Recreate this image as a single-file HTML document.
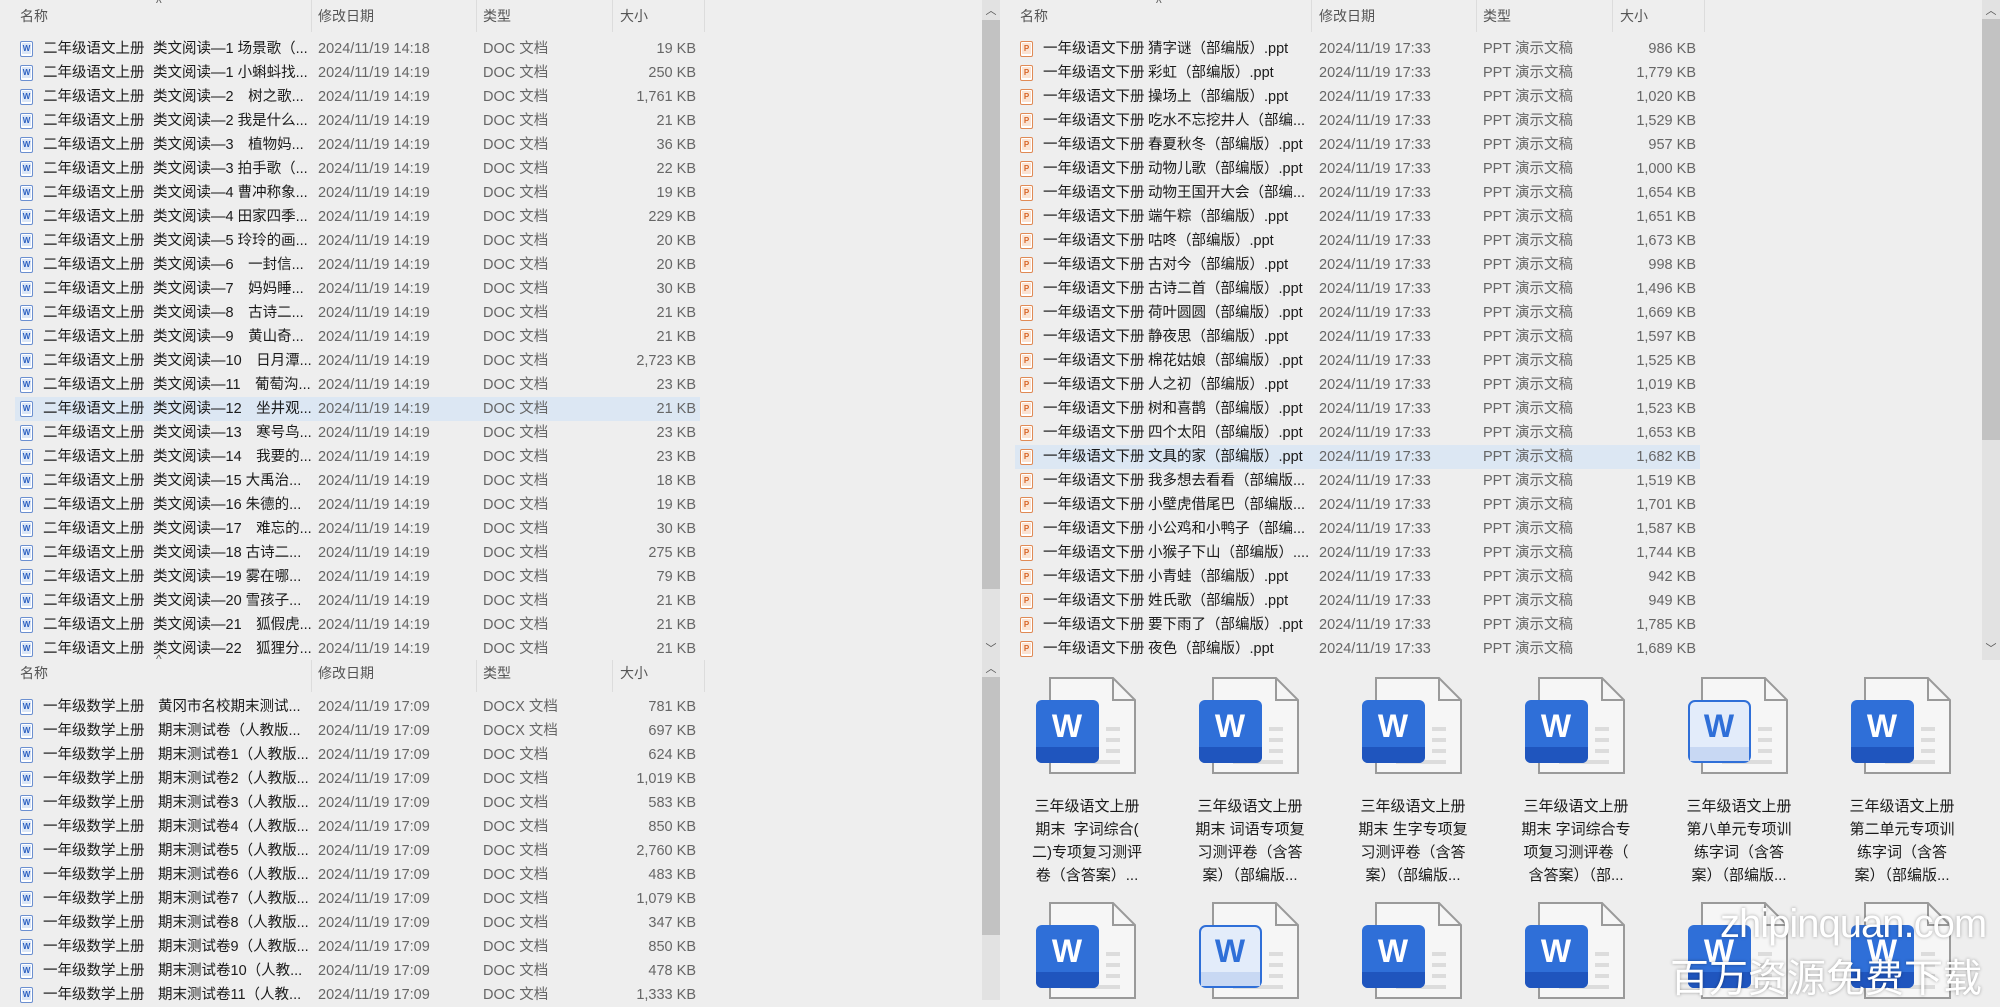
<!DOCTYPE html>
<html><head><meta charset="utf-8">
<style>
*{margin:0;padding:0;box-sizing:border-box}
body{width:2000px;height:1000px;overflow:hidden;background:#eeeeee;font-family:"Liberation Sans","Noto Sans CJK SC",sans-serif;font-size:14.5px;color:#1a1a1a;position:relative}
.a{position:absolute;white-space:nowrap}
.h{color:#555;font-size:14px}
.sep{position:absolute;top:0;width:1px;height:32px;background:#dcdcdc}
.r{position:absolute;height:24px;line-height:24px;white-space:nowrap}
.r span{position:absolute;top:0}
.g{color:#666}
.ic{position:absolute;top:4px;width:13px;height:16px;border:1px solid #6b8fd0;border-radius:2px;background:#fff;font-size:8px;line-height:13px;text-align:center;color:#2b5fc0;font-weight:bold}
.ic i{font-style:normal;display:block;margin:1px 1px;background:#dbe6f7;height:11px;line-height:11px}
.ip{border-color:#e08a55;color:#d8672a}
.ip i{background:#fbe3d3}
.sel{background:#dce7f3}
.sb{position:absolute;background:#e2e2e2}
.th{position:absolute;background:#c2c2c2}
.ar{position:absolute;font-size:11px;color:#555;width:18px;text-align:center}
.doc{position:absolute;width:100px;height:100px}
.lab{position:absolute;width:150px;text-align:center;font-size:15px;line-height:23px;color:#1a1a1a}
.wm{position:absolute;color:#fff;text-shadow:0 0 3px rgba(0,0,0,.35);white-space:nowrap}
</style></head><body>

<!-- LEFT TOP HEADER -->
<div class="a h" style="left:20px;top:6px">名称</div>
<div class="a h" style="left:156px;top:-4px;font-size:12px">^</div>
<div class="a h" style="left:318px;top:6px">修改日期</div>
<div class="a h" style="left:483px;top:6px">类型</div>
<div class="a h" style="left:620px;top:6px">大小</div>
<div class="sep" style="left:311px"></div><div class="sep" style="left:476px"></div><div class="sep" style="left:612px"></div><div class="sep" style="left:704px"></div>

<div style="position:absolute;left:0;top:0">
<div class="r" style="top:37px;width:700px"><b class="ic" style="left:20px"><i>W</i></b><span style="left:43px">二年级语文上册</span><span style="left:153px">类文阅读—1 场景歌（...</span><span class="g" style="left:318px">2024/11/19 14:18</span><span class="g" style="left:483px">DOC 文档</span><span class="g" style="right:4px">19 KB</span></div>
<div class="r" style="top:61px;width:700px"><b class="ic" style="left:20px"><i>W</i></b><span style="left:43px">二年级语文上册</span><span style="left:153px">类文阅读—1 小蝌蚪找...</span><span class="g" style="left:318px">2024/11/19 14:19</span><span class="g" style="left:483px">DOC 文档</span><span class="g" style="right:4px">250 KB</span></div>
<div class="r" style="top:85px;width:700px"><b class="ic" style="left:20px"><i>W</i></b><span style="left:43px">二年级语文上册</span><span style="left:153px">类文阅读—2　树之歌...</span><span class="g" style="left:318px">2024/11/19 14:19</span><span class="g" style="left:483px">DOC 文档</span><span class="g" style="right:4px">1,761 KB</span></div>
<div class="r" style="top:109px;width:700px"><b class="ic" style="left:20px"><i>W</i></b><span style="left:43px">二年级语文上册</span><span style="left:153px">类文阅读—2 我是什么...</span><span class="g" style="left:318px">2024/11/19 14:19</span><span class="g" style="left:483px">DOC 文档</span><span class="g" style="right:4px">21 KB</span></div>
<div class="r" style="top:133px;width:700px"><b class="ic" style="left:20px"><i>W</i></b><span style="left:43px">二年级语文上册</span><span style="left:153px">类文阅读—3　植物妈...</span><span class="g" style="left:318px">2024/11/19 14:19</span><span class="g" style="left:483px">DOC 文档</span><span class="g" style="right:4px">36 KB</span></div>
<div class="r" style="top:157px;width:700px"><b class="ic" style="left:20px"><i>W</i></b><span style="left:43px">二年级语文上册</span><span style="left:153px">类文阅读—3 拍手歌（...</span><span class="g" style="left:318px">2024/11/19 14:19</span><span class="g" style="left:483px">DOC 文档</span><span class="g" style="right:4px">22 KB</span></div>
<div class="r" style="top:181px;width:700px"><b class="ic" style="left:20px"><i>W</i></b><span style="left:43px">二年级语文上册</span><span style="left:153px">类文阅读—4 曹冲称象...</span><span class="g" style="left:318px">2024/11/19 14:19</span><span class="g" style="left:483px">DOC 文档</span><span class="g" style="right:4px">19 KB</span></div>
<div class="r" style="top:205px;width:700px"><b class="ic" style="left:20px"><i>W</i></b><span style="left:43px">二年级语文上册</span><span style="left:153px">类文阅读—4 田家四季...</span><span class="g" style="left:318px">2024/11/19 14:19</span><span class="g" style="left:483px">DOC 文档</span><span class="g" style="right:4px">229 KB</span></div>
<div class="r" style="top:229px;width:700px"><b class="ic" style="left:20px"><i>W</i></b><span style="left:43px">二年级语文上册</span><span style="left:153px">类文阅读—5 玲玲的画...</span><span class="g" style="left:318px">2024/11/19 14:19</span><span class="g" style="left:483px">DOC 文档</span><span class="g" style="right:4px">20 KB</span></div>
<div class="r" style="top:253px;width:700px"><b class="ic" style="left:20px"><i>W</i></b><span style="left:43px">二年级语文上册</span><span style="left:153px">类文阅读—6　一封信...</span><span class="g" style="left:318px">2024/11/19 14:19</span><span class="g" style="left:483px">DOC 文档</span><span class="g" style="right:4px">20 KB</span></div>
<div class="r" style="top:277px;width:700px"><b class="ic" style="left:20px"><i>W</i></b><span style="left:43px">二年级语文上册</span><span style="left:153px">类文阅读—7　妈妈睡...</span><span class="g" style="left:318px">2024/11/19 14:19</span><span class="g" style="left:483px">DOC 文档</span><span class="g" style="right:4px">30 KB</span></div>
<div class="r" style="top:301px;width:700px"><b class="ic" style="left:20px"><i>W</i></b><span style="left:43px">二年级语文上册</span><span style="left:153px">类文阅读—8　古诗二...</span><span class="g" style="left:318px">2024/11/19 14:19</span><span class="g" style="left:483px">DOC 文档</span><span class="g" style="right:4px">21 KB</span></div>
<div class="r" style="top:325px;width:700px"><b class="ic" style="left:20px"><i>W</i></b><span style="left:43px">二年级语文上册</span><span style="left:153px">类文阅读—9　黄山奇...</span><span class="g" style="left:318px">2024/11/19 14:19</span><span class="g" style="left:483px">DOC 文档</span><span class="g" style="right:4px">21 KB</span></div>
<div class="r" style="top:349px;width:700px"><b class="ic" style="left:20px"><i>W</i></b><span style="left:43px">二年级语文上册</span><span style="left:153px">类文阅读—10　日月潭...</span><span class="g" style="left:318px">2024/11/19 14:19</span><span class="g" style="left:483px">DOC 文档</span><span class="g" style="right:4px">2,723 KB</span></div>
<div class="r" style="top:373px;width:700px"><b class="ic" style="left:20px"><i>W</i></b><span style="left:43px">二年级语文上册</span><span style="left:153px">类文阅读—11　葡萄沟...</span><span class="g" style="left:318px">2024/11/19 14:19</span><span class="g" style="left:483px">DOC 文档</span><span class="g" style="right:4px">23 KB</span></div>
<div class="r sel" style="top:397px;left:15px;width:685px"><b class="ic" style="left:5px"><i>W</i></b><span style="left:28px">二年级语文上册</span><span style="left:138px">类文阅读—12　坐井观...</span><span class="g" style="left:303px">2024/11/19 14:19</span><span class="g" style="left:468px">DOC 文档</span><span class="g" style="right:4px">21 KB</span></div>
<div class="r" style="top:421px;width:700px"><b class="ic" style="left:20px"><i>W</i></b><span style="left:43px">二年级语文上册</span><span style="left:153px">类文阅读—13　寒号鸟...</span><span class="g" style="left:318px">2024/11/19 14:19</span><span class="g" style="left:483px">DOC 文档</span><span class="g" style="right:4px">23 KB</span></div>
<div class="r" style="top:445px;width:700px"><b class="ic" style="left:20px"><i>W</i></b><span style="left:43px">二年级语文上册</span><span style="left:153px">类文阅读—14　我要的...</span><span class="g" style="left:318px">2024/11/19 14:19</span><span class="g" style="left:483px">DOC 文档</span><span class="g" style="right:4px">23 KB</span></div>
<div class="r" style="top:469px;width:700px"><b class="ic" style="left:20px"><i>W</i></b><span style="left:43px">二年级语文上册</span><span style="left:153px">类文阅读—15 大禹治...</span><span class="g" style="left:318px">2024/11/19 14:19</span><span class="g" style="left:483px">DOC 文档</span><span class="g" style="right:4px">18 KB</span></div>
<div class="r" style="top:493px;width:700px"><b class="ic" style="left:20px"><i>W</i></b><span style="left:43px">二年级语文上册</span><span style="left:153px">类文阅读—16 朱德的...</span><span class="g" style="left:318px">2024/11/19 14:19</span><span class="g" style="left:483px">DOC 文档</span><span class="g" style="right:4px">19 KB</span></div>
<div class="r" style="top:517px;width:700px"><b class="ic" style="left:20px"><i>W</i></b><span style="left:43px">二年级语文上册</span><span style="left:153px">类文阅读—17　难忘的...</span><span class="g" style="left:318px">2024/11/19 14:19</span><span class="g" style="left:483px">DOC 文档</span><span class="g" style="right:4px">30 KB</span></div>
<div class="r" style="top:541px;width:700px"><b class="ic" style="left:20px"><i>W</i></b><span style="left:43px">二年级语文上册</span><span style="left:153px">类文阅读—18 古诗二...</span><span class="g" style="left:318px">2024/11/19 14:19</span><span class="g" style="left:483px">DOC 文档</span><span class="g" style="right:4px">275 KB</span></div>
<div class="r" style="top:565px;width:700px"><b class="ic" style="left:20px"><i>W</i></b><span style="left:43px">二年级语文上册</span><span style="left:153px">类文阅读—19 雾在哪...</span><span class="g" style="left:318px">2024/11/19 14:19</span><span class="g" style="left:483px">DOC 文档</span><span class="g" style="right:4px">79 KB</span></div>
<div class="r" style="top:589px;width:700px"><b class="ic" style="left:20px"><i>W</i></b><span style="left:43px">二年级语文上册</span><span style="left:153px">类文阅读—20 雪孩子...</span><span class="g" style="left:318px">2024/11/19 14:19</span><span class="g" style="left:483px">DOC 文档</span><span class="g" style="right:4px">21 KB</span></div>
<div class="r" style="top:613px;width:700px"><b class="ic" style="left:20px"><i>W</i></b><span style="left:43px">二年级语文上册</span><span style="left:153px">类文阅读—21　狐假虎...</span><span class="g" style="left:318px">2024/11/19 14:19</span><span class="g" style="left:483px">DOC 文档</span><span class="g" style="right:4px">21 KB</span></div>
<div class="r" style="top:637px;width:700px"><b class="ic" style="left:20px"><i>W</i></b><span style="left:43px">二年级语文上册</span><span style="left:153px">类文阅读—22　狐狸分...</span><span class="g" style="left:318px">2024/11/19 14:19</span><span class="g" style="left:483px">DOC 文档</span><span class="g" style="right:4px">21 KB</span></div>
</div>

<!-- LEFT BOTTOM HEADER -->
<div class="a h" style="left:20px;top:663px">名称</div>
<div class="a h" style="left:156px;top:652px;font-size:12px">^</div>
<div class="a h" style="left:318px;top:663px">修改日期</div>
<div class="a h" style="left:483px;top:663px">类型</div>
<div class="a h" style="left:620px;top:663px">大小</div>
<div class="sep" style="left:311px;top:660px"></div><div class="sep" style="left:476px;top:660px"></div><div class="sep" style="left:612px;top:660px"></div><div class="sep" style="left:704px;top:660px"></div>

<div style="position:absolute;left:0;top:0">
<div class="r" style="top:695px;width:700px"><b class="ic" style="left:20px"><i>W</i></b><span style="left:43px">一年级数学上册</span><span style="left:158px">黄冈市名校期末测试...</span><span class="g" style="left:318px">2024/11/19 17:09</span><span class="g" style="left:483px">DOCX 文档</span><span class="g" style="right:4px">781 KB</span></div>
<div class="r" style="top:719px;width:700px"><b class="ic" style="left:20px"><i>W</i></b><span style="left:43px">一年级数学上册</span><span style="left:158px">期末测试卷（人教版...</span><span class="g" style="left:318px">2024/11/19 17:09</span><span class="g" style="left:483px">DOCX 文档</span><span class="g" style="right:4px">697 KB</span></div>
<div class="r" style="top:743px;width:700px"><b class="ic" style="left:20px"><i>W</i></b><span style="left:43px">一年级数学上册</span><span style="left:158px">期末测试卷1（人教版...</span><span class="g" style="left:318px">2024/11/19 17:09</span><span class="g" style="left:483px">DOC 文档</span><span class="g" style="right:4px">624 KB</span></div>
<div class="r" style="top:767px;width:700px"><b class="ic" style="left:20px"><i>W</i></b><span style="left:43px">一年级数学上册</span><span style="left:158px">期末测试卷2（人教版...</span><span class="g" style="left:318px">2024/11/19 17:09</span><span class="g" style="left:483px">DOC 文档</span><span class="g" style="right:4px">1,019 KB</span></div>
<div class="r" style="top:791px;width:700px"><b class="ic" style="left:20px"><i>W</i></b><span style="left:43px">一年级数学上册</span><span style="left:158px">期末测试卷3（人教版...</span><span class="g" style="left:318px">2024/11/19 17:09</span><span class="g" style="left:483px">DOC 文档</span><span class="g" style="right:4px">583 KB</span></div>
<div class="r" style="top:815px;width:700px"><b class="ic" style="left:20px"><i>W</i></b><span style="left:43px">一年级数学上册</span><span style="left:158px">期末测试卷4（人教版...</span><span class="g" style="left:318px">2024/11/19 17:09</span><span class="g" style="left:483px">DOC 文档</span><span class="g" style="right:4px">850 KB</span></div>
<div class="r" style="top:839px;width:700px"><b class="ic" style="left:20px"><i>W</i></b><span style="left:43px">一年级数学上册</span><span style="left:158px">期末测试卷5（人教版...</span><span class="g" style="left:318px">2024/11/19 17:09</span><span class="g" style="left:483px">DOC 文档</span><span class="g" style="right:4px">2,760 KB</span></div>
<div class="r" style="top:863px;width:700px"><b class="ic" style="left:20px"><i>W</i></b><span style="left:43px">一年级数学上册</span><span style="left:158px">期末测试卷6（人教版...</span><span class="g" style="left:318px">2024/11/19 17:09</span><span class="g" style="left:483px">DOC 文档</span><span class="g" style="right:4px">483 KB</span></div>
<div class="r" style="top:887px;width:700px"><b class="ic" style="left:20px"><i>W</i></b><span style="left:43px">一年级数学上册</span><span style="left:158px">期末测试卷7（人教版...</span><span class="g" style="left:318px">2024/11/19 17:09</span><span class="g" style="left:483px">DOC 文档</span><span class="g" style="right:4px">1,079 KB</span></div>
<div class="r" style="top:911px;width:700px"><b class="ic" style="left:20px"><i>W</i></b><span style="left:43px">一年级数学上册</span><span style="left:158px">期末测试卷8（人教版...</span><span class="g" style="left:318px">2024/11/19 17:09</span><span class="g" style="left:483px">DOC 文档</span><span class="g" style="right:4px">347 KB</span></div>
<div class="r" style="top:935px;width:700px"><b class="ic" style="left:20px"><i>W</i></b><span style="left:43px">一年级数学上册</span><span style="left:158px">期末测试卷9（人教版...</span><span class="g" style="left:318px">2024/11/19 17:09</span><span class="g" style="left:483px">DOC 文档</span><span class="g" style="right:4px">850 KB</span></div>
<div class="r" style="top:959px;width:700px"><b class="ic" style="left:20px"><i>W</i></b><span style="left:43px">一年级数学上册</span><span style="left:158px">期末测试卷10（人教...</span><span class="g" style="left:318px">2024/11/19 17:09</span><span class="g" style="left:483px">DOC 文档</span><span class="g" style="right:4px">478 KB</span></div>
<div class="r" style="top:983px;width:700px"><b class="ic" style="left:20px"><i>W</i></b><span style="left:43px">一年级数学上册</span><span style="left:158px">期末测试卷11（人教...</span><span class="g" style="left:318px">2024/11/19 17:09</span><span class="g" style="left:483px">DOC 文档</span><span class="g" style="right:4px">1,333 KB</span></div>
</div>

<!-- LEFT SCROLLBARS -->
<div class="sb" style="left:982px;top:0;width:18px;height:660px"></div>
<div class="th" style="left:982px;top:20px;width:18px;height:569px"></div>
<div class="ar" style="left:982px;top:2px">︿</div>
<div class="ar" style="left:982px;top:640px">﹀</div>
<div class="sb" style="left:982px;top:660px;width:18px;height:340px"></div>
<div class="th" style="left:982px;top:677px;width:18px;height:258px"></div>
<div class="ar" style="left:982px;top:660px">︿</div>

<!-- RIGHT TOP HEADER -->
<div class="a h" style="left:1020px;top:6px">名称</div>
<div class="a h" style="left:1156px;top:-4px;font-size:12px">^</div>
<div class="a h" style="left:1319px;top:6px">修改日期</div>
<div class="a h" style="left:1483px;top:6px">类型</div>
<div class="a h" style="left:1620px;top:6px">大小</div>
<div class="sep" style="left:1311px"></div><div class="sep" style="left:1476px"></div><div class="sep" style="left:1612px"></div><div class="sep" style="left:1704px"></div>

<div style="position:absolute;left:1000px;top:0">
<div class="r" style="top:37px;width:700px"><b class="ic ip" style="left:20px"><i>P</i></b><span style="left:43px">一年级语文下册</span><span style="left:148px">猜字谜（部编版）.ppt</span><span class="g" style="left:319px">2024/11/19 17:33</span><span class="g" style="left:483px">PPT 演示文稿</span><span class="g" style="right:4px">986 KB</span></div>
<div class="r" style="top:61px;width:700px"><b class="ic ip" style="left:20px"><i>P</i></b><span style="left:43px">一年级语文下册</span><span style="left:148px">彩虹（部编版）.ppt</span><span class="g" style="left:319px">2024/11/19 17:33</span><span class="g" style="left:483px">PPT 演示文稿</span><span class="g" style="right:4px">1,779 KB</span></div>
<div class="r" style="top:85px;width:700px"><b class="ic ip" style="left:20px"><i>P</i></b><span style="left:43px">一年级语文下册</span><span style="left:148px">操场上（部编版）.ppt</span><span class="g" style="left:319px">2024/11/19 17:33</span><span class="g" style="left:483px">PPT 演示文稿</span><span class="g" style="right:4px">1,020 KB</span></div>
<div class="r" style="top:109px;width:700px"><b class="ic ip" style="left:20px"><i>P</i></b><span style="left:43px">一年级语文下册</span><span style="left:148px">吃水不忘挖井人（部编...</span><span class="g" style="left:319px">2024/11/19 17:33</span><span class="g" style="left:483px">PPT 演示文稿</span><span class="g" style="right:4px">1,529 KB</span></div>
<div class="r" style="top:133px;width:700px"><b class="ic ip" style="left:20px"><i>P</i></b><span style="left:43px">一年级语文下册</span><span style="left:148px">春夏秋冬（部编版）.ppt</span><span class="g" style="left:319px">2024/11/19 17:33</span><span class="g" style="left:483px">PPT 演示文稿</span><span class="g" style="right:4px">957 KB</span></div>
<div class="r" style="top:157px;width:700px"><b class="ic ip" style="left:20px"><i>P</i></b><span style="left:43px">一年级语文下册</span><span style="left:148px">动物儿歌（部编版）.ppt</span><span class="g" style="left:319px">2024/11/19 17:33</span><span class="g" style="left:483px">PPT 演示文稿</span><span class="g" style="right:4px">1,000 KB</span></div>
<div class="r" style="top:181px;width:700px"><b class="ic ip" style="left:20px"><i>P</i></b><span style="left:43px">一年级语文下册</span><span style="left:148px">动物王国开大会（部编...</span><span class="g" style="left:319px">2024/11/19 17:33</span><span class="g" style="left:483px">PPT 演示文稿</span><span class="g" style="right:4px">1,654 KB</span></div>
<div class="r" style="top:205px;width:700px"><b class="ic ip" style="left:20px"><i>P</i></b><span style="left:43px">一年级语文下册</span><span style="left:148px">端午粽（部编版）.ppt</span><span class="g" style="left:319px">2024/11/19 17:33</span><span class="g" style="left:483px">PPT 演示文稿</span><span class="g" style="right:4px">1,651 KB</span></div>
<div class="r" style="top:229px;width:700px"><b class="ic ip" style="left:20px"><i>P</i></b><span style="left:43px">一年级语文下册</span><span style="left:148px">咕咚（部编版）.ppt</span><span class="g" style="left:319px">2024/11/19 17:33</span><span class="g" style="left:483px">PPT 演示文稿</span><span class="g" style="right:4px">1,673 KB</span></div>
<div class="r" style="top:253px;width:700px"><b class="ic ip" style="left:20px"><i>P</i></b><span style="left:43px">一年级语文下册</span><span style="left:148px">古对今（部编版）.ppt</span><span class="g" style="left:319px">2024/11/19 17:33</span><span class="g" style="left:483px">PPT 演示文稿</span><span class="g" style="right:4px">998 KB</span></div>
<div class="r" style="top:277px;width:700px"><b class="ic ip" style="left:20px"><i>P</i></b><span style="left:43px">一年级语文下册</span><span style="left:148px">古诗二首（部编版）.ppt</span><span class="g" style="left:319px">2024/11/19 17:33</span><span class="g" style="left:483px">PPT 演示文稿</span><span class="g" style="right:4px">1,496 KB</span></div>
<div class="r" style="top:301px;width:700px"><b class="ic ip" style="left:20px"><i>P</i></b><span style="left:43px">一年级语文下册</span><span style="left:148px">荷叶圆圆（部编版）.ppt</span><span class="g" style="left:319px">2024/11/19 17:33</span><span class="g" style="left:483px">PPT 演示文稿</span><span class="g" style="right:4px">1,669 KB</span></div>
<div class="r" style="top:325px;width:700px"><b class="ic ip" style="left:20px"><i>P</i></b><span style="left:43px">一年级语文下册</span><span style="left:148px">静夜思（部编版）.ppt</span><span class="g" style="left:319px">2024/11/19 17:33</span><span class="g" style="left:483px">PPT 演示文稿</span><span class="g" style="right:4px">1,597 KB</span></div>
<div class="r" style="top:349px;width:700px"><b class="ic ip" style="left:20px"><i>P</i></b><span style="left:43px">一年级语文下册</span><span style="left:148px">棉花姑娘（部编版）.ppt</span><span class="g" style="left:319px">2024/11/19 17:33</span><span class="g" style="left:483px">PPT 演示文稿</span><span class="g" style="right:4px">1,525 KB</span></div>
<div class="r" style="top:373px;width:700px"><b class="ic ip" style="left:20px"><i>P</i></b><span style="left:43px">一年级语文下册</span><span style="left:148px">人之初（部编版）.ppt</span><span class="g" style="left:319px">2024/11/19 17:33</span><span class="g" style="left:483px">PPT 演示文稿</span><span class="g" style="right:4px">1,019 KB</span></div>
<div class="r" style="top:397px;width:700px"><b class="ic ip" style="left:20px"><i>P</i></b><span style="left:43px">一年级语文下册</span><span style="left:148px">树和喜鹊（部编版）.ppt</span><span class="g" style="left:319px">2024/11/19 17:33</span><span class="g" style="left:483px">PPT 演示文稿</span><span class="g" style="right:4px">1,523 KB</span></div>
<div class="r" style="top:421px;width:700px"><b class="ic ip" style="left:20px"><i>P</i></b><span style="left:43px">一年级语文下册</span><span style="left:148px">四个太阳（部编版）.ppt</span><span class="g" style="left:319px">2024/11/19 17:33</span><span class="g" style="left:483px">PPT 演示文稿</span><span class="g" style="right:4px">1,653 KB</span></div>
<div class="r sel" style="top:445px;left:15px;width:685px"><b class="ic ip" style="left:5px"><i>P</i></b><span style="left:28px">一年级语文下册</span><span style="left:133px">文具的家（部编版）.ppt</span><span class="g" style="left:304px">2024/11/19 17:33</span><span class="g" style="left:468px">PPT 演示文稿</span><span class="g" style="right:4px">1,682 KB</span></div>
<div class="r" style="top:469px;width:700px"><b class="ic ip" style="left:20px"><i>P</i></b><span style="left:43px">一年级语文下册</span><span style="left:148px">我多想去看看（部编版...</span><span class="g" style="left:319px">2024/11/19 17:33</span><span class="g" style="left:483px">PPT 演示文稿</span><span class="g" style="right:4px">1,519 KB</span></div>
<div class="r" style="top:493px;width:700px"><b class="ic ip" style="left:20px"><i>P</i></b><span style="left:43px">一年级语文下册</span><span style="left:148px">小壁虎借尾巴（部编版...</span><span class="g" style="left:319px">2024/11/19 17:33</span><span class="g" style="left:483px">PPT 演示文稿</span><span class="g" style="right:4px">1,701 KB</span></div>
<div class="r" style="top:517px;width:700px"><b class="ic ip" style="left:20px"><i>P</i></b><span style="left:43px">一年级语文下册</span><span style="left:148px">小公鸡和小鸭子（部编...</span><span class="g" style="left:319px">2024/11/19 17:33</span><span class="g" style="left:483px">PPT 演示文稿</span><span class="g" style="right:4px">1,587 KB</span></div>
<div class="r" style="top:541px;width:700px"><b class="ic ip" style="left:20px"><i>P</i></b><span style="left:43px">一年级语文下册</span><span style="left:148px">小猴子下山（部编版）....</span><span class="g" style="left:319px">2024/11/19 17:33</span><span class="g" style="left:483px">PPT 演示文稿</span><span class="g" style="right:4px">1,744 KB</span></div>
<div class="r" style="top:565px;width:700px"><b class="ic ip" style="left:20px"><i>P</i></b><span style="left:43px">一年级语文下册</span><span style="left:148px">小青蛙（部编版）.ppt</span><span class="g" style="left:319px">2024/11/19 17:33</span><span class="g" style="left:483px">PPT 演示文稿</span><span class="g" style="right:4px">942 KB</span></div>
<div class="r" style="top:589px;width:700px"><b class="ic ip" style="left:20px"><i>P</i></b><span style="left:43px">一年级语文下册</span><span style="left:148px">姓氏歌（部编版）.ppt</span><span class="g" style="left:319px">2024/11/19 17:33</span><span class="g" style="left:483px">PPT 演示文稿</span><span class="g" style="right:4px">949 KB</span></div>
<div class="r" style="top:613px;width:700px"><b class="ic ip" style="left:20px"><i>P</i></b><span style="left:43px">一年级语文下册</span><span style="left:148px">要下雨了（部编版）.ppt</span><span class="g" style="left:319px">2024/11/19 17:33</span><span class="g" style="left:483px">PPT 演示文稿</span><span class="g" style="right:4px">1,785 KB</span></div>
<div class="r" style="top:637px;width:700px"><b class="ic ip" style="left:20px"><i>P</i></b><span style="left:43px">一年级语文下册</span><span style="left:148px">夜色（部编版）.ppt</span><span class="g" style="left:319px">2024/11/19 17:33</span><span class="g" style="left:483px">PPT 演示文稿</span><span class="g" style="right:4px">1,689 KB</span></div>
</div>

<!-- RIGHT SCROLLBAR -->
<div class="sb" style="left:1982px;top:0;width:18px;height:660px"></div>
<div class="th" style="left:1982px;top:19px;width:18px;height:421px"></div>
<div class="ar" style="left:1982px;top:2px">︿</div>
<div class="ar" style="left:1982px;top:640px">﹀</div>

<!-- ICON GRID -->
<svg width="0" height="0" style="position:absolute">
<defs>
<g id="pg">
<path d="M14 1 H77 L99 23 V96 H14 Z" fill="#f6f6f6" stroke="#9a9a9a" stroke-width="2"/>
<path d="M77 1 V23 H99" fill="none" stroke="#9a9a9a" stroke-width="2"/>
<rect x="70" y="50" width="14" height="4" fill="#dcdcdc"/>
<rect x="70" y="61" width="14" height="4" fill="#dcdcdc"/>
<rect x="70" y="72" width="14" height="4" fill="#dcdcdc"/>
<rect x="34" y="83" width="50" height="4" fill="#dcdcdc"/>
</g>
<g id="wb">
<rect x="0" y="23" width="63" height="63" rx="6" fill="#2f6fd8"/>
<path d="M0 70 H63 V80 a6 6 0 0 1 -6 6 H6 a6 6 0 0 1 -6 -6 Z" fill="#1f55be"/>
<text x="31" y="60" text-anchor="middle" font-family="Liberation Sans,sans-serif" font-weight="bold" font-size="32" fill="#fff">W</text>
</g>
<g id="wl">
<rect x="1" y="24" width="61" height="61" rx="6" fill="#e3ecfa" stroke="#2f6fd8" stroke-width="2"/>
<rect x="2" y="70" width="59" height="14" fill="#c8d8f3"/>
<text x="31" y="60" text-anchor="middle" font-family="Liberation Sans,sans-serif" font-weight="bold" font-size="32" fill="#2f6fd8">W</text>
</g>
</defs></svg>

<svg class="doc" style="left:1036px;top:677px" viewBox="0 0 100 100"><use href="#pg"/><use href="#wb"/></svg>
<svg class="doc" style="left:1199px;top:677px" viewBox="0 0 100 100"><use href="#pg"/><use href="#wb"/></svg>
<svg class="doc" style="left:1362px;top:677px" viewBox="0 0 100 100"><use href="#pg"/><use href="#wb"/></svg>
<svg class="doc" style="left:1525px;top:677px" viewBox="0 0 100 100"><use href="#pg"/><use href="#wb"/></svg>
<svg class="doc" style="left:1688px;top:677px" viewBox="0 0 100 100"><use href="#pg"/><use href="#wl"/></svg>
<svg class="doc" style="left:1851px;top:677px" viewBox="0 0 100 100"><use href="#pg"/><use href="#wb"/></svg>

<svg class="doc" style="left:1036px;top:902px" viewBox="0 0 100 100"><use href="#pg"/><use href="#wb"/></svg>
<svg class="doc" style="left:1199px;top:902px" viewBox="0 0 100 100"><use href="#pg"/><use href="#wl"/></svg>
<svg class="doc" style="left:1362px;top:902px" viewBox="0 0 100 100"><use href="#pg"/><use href="#wb"/></svg>
<svg class="doc" style="left:1525px;top:902px" viewBox="0 0 100 100"><use href="#pg"/><use href="#wb"/></svg>
<svg class="doc" style="left:1688px;top:902px" viewBox="0 0 100 100"><use href="#pg"/><use href="#wb"/></svg>
<svg class="doc" style="left:1851px;top:902px" viewBox="0 0 100 100"><use href="#pg"/><use href="#wb"/></svg>

<div class="lab" style="left:1012px;top:795px">三年级语文上册<br>期末&nbsp; 字词综合(<br>二)专项复习测评<br>卷（含答案）...</div>
<div class="lab" style="left:1175px;top:795px">三年级语文上册<br>期末 词语专项复<br>习测评卷（含答<br>案）（部编版...</div>
<div class="lab" style="left:1338px;top:795px">三年级语文上册<br>期末 生字专项复<br>习测评卷（含答<br>案）（部编版...</div>
<div class="lab" style="left:1501px;top:795px">三年级语文上册<br>期末 字词综合专<br>项复习测评卷（<br>含答案）（部...</div>
<div class="lab" style="left:1664px;top:795px">三年级语文上册<br>第八单元专项训<br>练字词（含答<br>案）（部编版...</div>
<div class="lab" style="left:1827px;top:795px">三年级语文上册<br>第二单元专项训<br>练字词（含答<br>案）（部编版...</div>

<div class="wm" style="left:1720px;top:902px;font-size:40px;font-family:'Liberation Sans',sans-serif;letter-spacing:-1px">zhipinquan.com</div>
<div class="wm" style="left:1670px;top:948px;font-size:39px;font-family:'Noto Sans CJK SC',sans-serif">百万资源免费下载</div>
</body></html>
